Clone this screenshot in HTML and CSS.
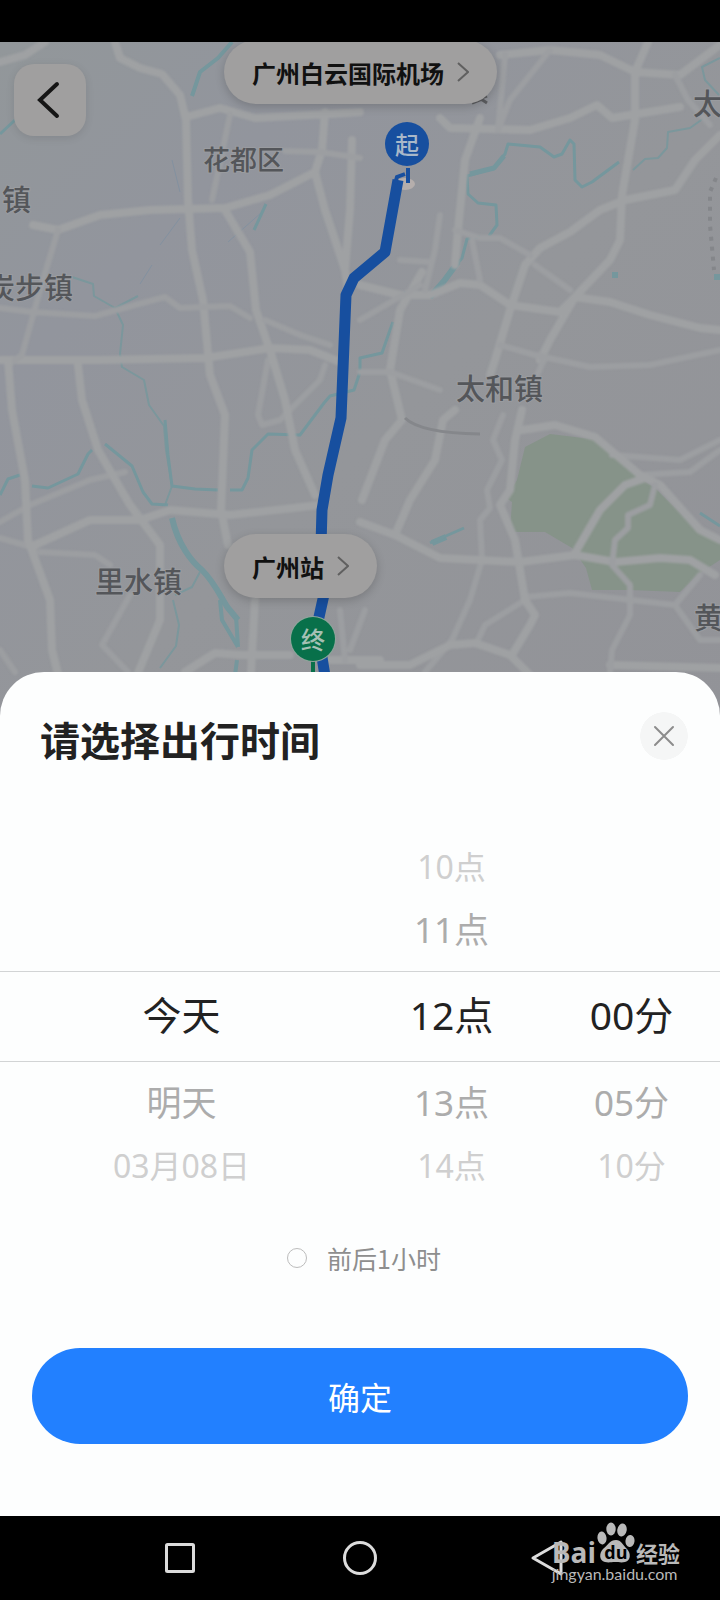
FILE: index.html
```html
<!DOCTYPE html>
<html lang="zh-CN">
<head>
<meta charset="utf-8">
<meta name="viewport" content="width=device-width, initial-scale=1">
<title>请选择出行时间</title>
<link rel="stylesheet" href="styles.css">
</head>
<body>
<div class="screen">
  <div class="status-bar"></div>

  <main class="map">
    <svg class="map-art" viewBox="0 42 720 680" aria-hidden="true">
      <defs>
        <linearGradient id="land" x1="0" y1="0" x2="1" y2="1">
          <stop offset="0" stop-color="#92979a"/>
          <stop offset="0.25" stop-color="#92959d"/>
          <stop offset="0.55" stop-color="#94969a"/>
          <stop offset="1" stop-color="#929398"/>
        </linearGradient>
      </defs>
      <rect x="0" y="42" width="720" height="680" fill="url(#land)"/>
      <path class="park" d="M525 447L550 434L600 440L640 478L655 488L700 532L720 543V560L700 573L680 592L630 590L592 590L586 568L572 548L545 532L510 532L512 502L506 498L517 480Z"/>
      <g class="water">
        <path class="w4" d="M232 42L218 58L200 72L192 96"/>
        <path class="w3" d="M0 134L15 120"/>
        <path class="w1" d="M172 160L180 192M180 218L160 245M152 265L140 284M262 212L228 242"/>
        <path class="w3" d="M266 204L254 230"/>
        <path class="w2" d="M72 277L93 284L94 296L115 308L123 325L120 354L122 367L144 380L149 405L164 426L166 450L172 486M172 486L165 505M115 308L138 296"/>
        <path class="w3" d="M165 420L168 455L172 486L195 489L218 490"/>
        <path class="w3" d="M0 495L8 479L20 475M32 486L48 488L78 474L88 454L92 450M105 444L132 466L143 492L152 504L168 505"/>
        <path class="w3" d="M230 490L242 490L248 478L252 450L268 434L300 435L324 403L330 396L354 390L360 372L360 358L382 353L390 330L393 322"/>
        <path class="w6" d="M172 518C178 545 192 562 202 570C216 584 222 600 228 608L238 620"/>
        <path class="w4" d="M220 600L222 620L238 647M236 616L238 647M237 660L233 690"/>
        <path class="w2" d="M200 572L192 587L175 595M173 600L179 625L176 646L160 668"/>
        <path class="w3" d="M480 237L467 239L462 258L444 280L430 298M404 293L417 294M402 304L400 312"/>
        <path class="w6" d="M458 262L444 281L430 297"/>
        <path class="w3" d="M489 236L497 225L496 205L478 203L468 194L467 176L494 168L505 154L508 144L540 147L554 157L562 154L570 140L574 144L575 180L582 187L592 182L619 162"/>
        <path class="w5" d="M470 174L494 168L504 156"/>
        <path class="w2" d="M633 170L645 159L658 158L667 148L668 132L690 128L704 118M720 58L702 67L705 80L719 95"/>
        <path class="w6" d="M432 543L446 537M612 275H618M714 277H720"/>
        <path class="w3" d="M430 543L464 528M700 513L720 526"/>
      </g>
      <g class="roads">
        <path d="M0 62L25 55L45 42M115 42L120 58L140 68L162 74L180 95L186 120L188 200L192 250L203 300L210 375L225 415L221 510L228 545M186 117L220 108L255 118L330 114L360 112M33 225L58 230L100 215L150 210L225 208L270 195L315 172L322 150L325 112M225 210L250 252L256 310L268 345M0 360L100 360L205 358L270 348L310 350L340 362M315 172L325 210L345 270L348 290M352 140L350 210L345 270"/>
        <path class="thin" d="M58 230L40 290L22 355L8 365M0 308L32 312L95 316L135 305L165 297L180 308L230 306L250 318M265 320L300 335L330 345M285 151L320 152L360 158M230 115L212 200M0 522L30 505L90 480L125 472M40 552L95 555L110 565M130 595L102 645L128 672M268 360L258 415L262 425L280 420L320 380L325 365M0 650L15 672M0 538L35 548"/>
        <path d="M8 360L12 410L25 480L28 540L50 600L52 650L62 690M78 365L82 400L98 450L130 505L160 545L160 620L135 680M35 545L90 520L140 520L170 510L230 515L320 505M270 350L285 400L295 450L315 495M185 672L215 653L240 655L290 655M255 600L250 690M330 660H380"/>
        <path d="M500 55L550 50L600 55L635 72L680 75L720 45M440 118L450 128L530 130L570 118L597 105L612 118L680 107M648 42L635 72L635 120L622 195L620 240L610 260L575 297L550 340L540 360M720 135L695 160L675 190L625 200L600 210L570 232L540 248L525 265L510 310L495 360L490 375M480 118L465 160L458 230L455 265M360 285L400 295L430 295L460 283L480 285L510 305L560 312L575 297L610 302L650 315L700 328L720 330M422 272L400 310L390 370L402 420L385 440L362 500M455 410L443 420L435 460L410 500L395 535"/>
        <path class="thin" d="M550 50L510 100L498 130M505 55L498 130M675 75L688 100L710 125M440 215L435 250L425 290M455 230L480 238L500 238L530 255M535 265L570 290M480 280L472 240M400 260L430 262M503 415L493 440L502 460L487 490L490 508L480 520L482 560L470 600L452 640L425 672M535 355L590 367L650 365L720 350M360 320L420 285M390 372L440 390M612 455L680 460L720 440M640 475L690 472L720 450M478 640L485 625L525 600M525 597L570 593L675 605L700 575M675 605L700 640L720 640M360 372L390 372M500 345L545 358L530 390"/>
        <path d="M360 522L395 535L440 558L520 562L575 555L615 562L660 558L690 560L715 575M522 410L515 440L510 490L500 505L515 540L525 600L535 615L530 625L512 655M522 430L555 425L595 437L640 475L660 485L700 530L720 540M575 553L600 510L625 485L645 478M360 665L410 665L450 645L475 643L510 655L535 680M610 665L720 668"/>
        <path class="thin" d="M655 485L650 505L628 515L628 528L615 540L612 565L630 585L630 615L612 650L610 672M340 610L345 660M365 610L350 650"/>
      </g>
      <path class="rail" d="M405 418Q420 433 480 434"/>
      <path class="plane" d="M472 103L482 99M481 98L487 96M481 99L487 103"/>
      <path class="dots" d="M716 178L710 192V225L714 270"/>
      <ellipse cx="405" cy="184" rx="10" ry="6" fill="#b5aeac"/>
      <path class="route" d="M398 180L385 252L354 278L346 295L341 418L328 475L322 510L321 545L325 590L317 626L325 676"/>
      <path class="route-tip" d="M408 168V183M395 184L397 177L405 174"/>
      <path class="end-tip" d="M313 660V680"/>
      <g class="places">
        <text class="place-s" x="203" y="170">花都区</text>
        <text x="2" y="211">镇</text>
        <text x="-14" y="299">炭步镇</text>
        <text x="456" y="400">太和镇</text>
        <text x="95" y="593">里水镇</text>
        <text x="693" y="115">太</text>
        <text x="694" y="629">黄</text>
      </g>
    </svg>

    <button class="back" type="button" aria-label="返回">
      <svg viewBox="0 0 28 40" width="28" height="40"><path d="M21 4L4 20L21 36"/></svg>
    </button>
    <button class="pill pill-start" type="button">广州白云国际机场
      <svg viewBox="0 0 12 20" width="12" height="20"><path d="M1 1L11 10L1 19"/></svg>
    </button>
    <button class="pill pill-end" type="button">广州站
      <svg viewBox="0 0 12 20" width="12" height="20"><path d="M1 1L11 10L1 19"/></svg>
    </button>
    <span class="pin pin-start">起</span>
    <span class="pin pin-end">终</span>
  </main>

  <section class="sheet" aria-labelledby="sheet-title">
    <header class="sheet-head">
      <h1 class="sheet-title" id="sheet-title">请选择出行时间</h1>
      <button class="close" type="button" aria-label="关闭">
        <svg viewBox="0 0 22 22" width="22" height="22"><path d="M2 2L20 20M20 2L2 20"/></svg>
      </button>
    </header>

    <div class="picker">
      <ul class="wheel" role="listbox" aria-label="日期">
        <li class="far"></li>
        <li class="near"></li>
        <li class="chosen" role="option" aria-selected="true">今天</li>
        <li class="near" role="option">明天</li>
        <li class="far" role="option">03月08日</li>
      </ul>
      <ul class="wheel" role="listbox" aria-label="小时">
        <li class="far" role="option">10点</li>
        <li class="near" role="option">11点</li>
        <li class="chosen" role="option" aria-selected="true">12点</li>
        <li class="near" role="option">13点</li>
        <li class="far" role="option">14点</li>
      </ul>
      <ul class="wheel" role="listbox" aria-label="分钟">
        <li class="far"></li>
        <li class="near"></li>
        <li class="chosen" role="option" aria-selected="true">00分</li>
        <li class="near" role="option">05分</li>
        <li class="far" role="option">10分</li>
      </ul>
    </div>

    <label class="flexible" for="flexible">
      <input class="flexible-input" type="radio" id="flexible">
      <span>前后1小时</span>
    </label>

    <button class="confirm" type="button">确定</button>
  </section>

  <nav class="nav-bar">
    <button class="nav-key" type="button" aria-label="最近任务">
      <svg viewBox="0 0 36 36" width="36" height="36"><rect x="4.500" y="4.500" width="27" height="27" rx="1"/></svg>
    </button>
    <button class="nav-key" type="button" aria-label="主屏幕">
      <svg viewBox="0 0 36 36" width="36" height="36"><circle cx="18" cy="18" r="15.500"/></svg>
    </button>
    <button class="nav-key" type="button" aria-label="返回上一页">
      <svg viewBox="0 0 36 36" width="36" height="36"><path d="M39 2V34L11 18Z"/></svg>
    </button>
    <div class="watermark">
      <div class="brand">
        <span class="brand-latin">Bai</span>
        <span class="paw">
          <svg viewBox="0 0 38 42" width="38" height="42" aria-hidden="true">
            <ellipse cx="5" cy="16" rx="4.500" ry="6.500" transform="rotate(-8 5 16)"/>
            <ellipse cx="14" cy="7" rx="4.700" ry="6.500"/>
            <ellipse cx="25" cy="8" rx="4.700" ry="6.500" transform="rotate(10 25 8)"/>
            <ellipse cx="33" cy="19" rx="4.500" ry="6" transform="rotate(8 33 19)"/>
            <path d="M19 18C24 18 26 23 30 27C34 31 34 39 28 40C24 41 22 40 18 40C14 40 12 41 8 40C2 39 2 31 6 27C11 23 13 18 19 18Z"/>
          </svg>
          <span class="paw-text">du</span>
        </span>
        <span class="brand-cn">经验</span>
      </div>
      <div class="brand-url">jingyan.baidu.com</div>
    </div>
  </nav>
</div>
</body>
</html>
```

FILE: styles.css
```css
* {
  box-sizing: border-box;
}

body {
  margin: 0;
  background: #000;
  font-family: "Noto Sans", "Noto Sans CJK SC", sans-serif;
  color: #222;
}

button {
  margin: 0;
  padding: 0;
  border: 0;
  background: none;
  font: inherit;
  color: inherit;
  cursor: pointer;
}

svg {
  display: block;
}

.screen {
  display: flex;
  flex-direction: column;
  min-height: 100vh;
}

.status-bar {
  height: 42px;
  position: relative;
  z-index: 1;
  background: #000;
}

/* Map */
.map {
  position: relative;
  overflow: hidden;
}

.map-art {
  width: 100%;
  height: auto;
}

.park {
  fill: #869389;
}

.water path {
  fill: none;
  stroke: #75979d;
  stroke-linejoin: round;
}

.water .w1 { stroke-width: 1; stroke: #8391a0; }
.water .w2 { stroke-width: 2; stroke: #7b979c; }
.water .w3 { stroke-width: 3; }
.water .w4 { stroke-width: 4; }
.water .w5 { stroke-width: 5; }
.water .w6 { stroke-width: 6; }

.roads {
  filter: blur(1px);
}

.roads path {
  fill: none;
  stroke: #9fa1a3;
  stroke-width: 8;
  stroke-linejoin: round;
  stroke-linecap: round;
}

.roads .thin {
  stroke: #9c9ea1;
  stroke-width: 6;
}

.rail {
  fill: none;
  stroke: #85878b;
  stroke-width: 3;
}

.plane {
  fill: none;
  stroke: #5c5d60;
  stroke-width: 3;
}

.dots {
  fill: none;
  stroke: #84868a;
  stroke-width: 4;
  stroke-dasharray: 4 6;
}

.route {
  fill: none;
  stroke: #174f9f;
  stroke-width: 11;
  stroke-linejoin: round;
}

.route-tip {
  fill: none;
  stroke: #174f9f;
  stroke-width: 4;
}

.end-tip {
  stroke: #08704a;
  stroke-width: 4;
}

.places text {
  fill: #54565a;
  stroke: #9a9ca0;
  stroke-width: 2;
  paint-order: stroke;
  font-family: "Noto Sans CJK SC", sans-serif;
  font-size: 29px;
  font-weight: 500;
}

.places .place-s {
  font-size: 27px;
}

.back {
  position: absolute;
  left: 14px;
  top: 22px;
  display: grid;
  place-items: center;
  width: 72px;
  height: 72px;
  border-radius: 20px;
  background: #a09f9f;
  box-shadow: 0 2px 8px rgba(0, 0, 0, 0.1);
}

.back path {
  fill: none;
  stroke: #151515;
  stroke-width: 4;
  stroke-linecap: round;
}

.pill {
  position: absolute;
  left: 224px;
  display: flex;
  align-items: center;
  gap: 13px;
  height: 64px;
  padding: 0 28px;
  border-radius: 32px;
  background: #a09f9f;
  box-shadow: 0 3px 10px rgba(0, 0, 0, 0.18);
  color: #111;
  font-family: "Noto Sans CJK SC", sans-serif;
  font-size: 24px;
  font-weight: 700;
  white-space: nowrap;
}

.pill path {
  fill: none;
  stroke: #606060;
  stroke-width: 2;
}

.pill-start { top: -2px; }
.pill-end { top: 492px; }

.pin {
  position: absolute;
  display: grid;
  place-items: center;
  width: 44px;
  height: 44px;
  border-radius: 50%;
  color: #a9b8c9;
  font-family: "Noto Sans CJK SC", sans-serif;
  font-size: 24px;
  font-weight: 500;
  line-height: 1;
}

.pin-start {
  left: 385px;
  top: 80px;
  background: #174f9f;
}

.pin-end {
  left: 291px;
  top: 575px;
  background: #08704a;
  color: #a5c0b4;
  box-shadow: 0 0 0 1px #8fa69c;
}

/* Bottom sheet */
.sheet {
  position: relative;
  flex: 1;
  display: flex;
  flex-direction: column;
  margin-top: -50px;
  padding: 38px 0 72px;
  border-radius: 44px 44px 0 0;
  background: #fdfefe;
}

.sheet-head {
  display: flex;
  align-items: flex-start;
  justify-content: space-between;
  margin: 0 32px 77px 40px;
}

.sheet-title {
  margin: 0;
  font-family: "Noto Sans CJK SC", sans-serif;
  font-size: 40px;
  font-weight: 700;
  line-height: 58px;
}

.close {
  display: grid;
  place-items: center;
  width: 48px;
  height: 52px;
  background: radial-gradient(circle closest-side, #f5f6f6 98%, transparent);
}

.close path {
  fill: none;
  stroke: #8c8c8c;
  stroke-width: 2;
  stroke-linecap: round;
}

.picker {
  display: grid;
  grid-template-columns: 2fr 1fr 1fr;
}

.wheel {
  margin: 0;
  padding: 0;
  list-style: none;
  text-align: center;
}

.wheel li {
  padding-left: 3px;
  white-space: nowrap;
}

.wheel .chosen {
  height: 91px;
  border-top: 1px solid #d2d4d5;
  border-bottom: 1px solid #d2d4d5;
  font-size: 39px;
  line-height: 86px;
}

.wheel .near {
  height: 82px;
  color: #acacac;
  font-size: 35px;
  line-height: 82px;
}

.wheel .far {
  height: 44px;
  color: #cfcfcf;
  font-size: 32px;
  line-height: 44px;
}

.flexible {
  display: flex;
  align-items: center;
  align-self: center;
  gap: 20px;
  height: 40px;
  margin: 50px 0 70px 8px;
  color: #8e8e8e;
  font-family: "Noto Sans CJK SC", sans-serif;
  font-size: 25px;
}

.flexible-input {
  appearance: none;
  width: 20px;
  height: 20px;
  margin: 0;
  border: 1px solid #bcbcbc;
  border-radius: 50%;
}

.flexible-input:checked {
  border: 6px solid #2280ff;
}

.confirm {
  height: 96px;
  margin: 0 32px;
  border-radius: 48px;
  background: #2280ff;
  color: #fff;
  font-family: "Noto Sans CJK SC", sans-serif;
  font-size: 32px;
  line-height: 92px;
}

/* System navigation */
.nav-bar {
  position: relative;
  display: grid;
  grid-template-columns: repeat(3, 1fr);
  place-items: center;
  height: 84px;
  padding: 0 12.5%;
  background: #000;
}

.nav-key path,
.nav-key rect,
.nav-key circle {
  fill: none;
  stroke: #dcdcdc;
  stroke-width: 3;
  stroke-linejoin: round;
}

.nav-key svg {
  overflow: visible;
}

.watermark {
  position: absolute;
  right: 40px;
  top: 6px;
  color: #b9b9b9;
}

.brand {
  display: flex;
  align-items: flex-end;
  gap: 1px;
  height: 42px;
  line-height: 24px;
}

.brand-latin {
  font-family: "Open Sans", sans-serif;
  font-size: 28px;
  font-weight: 700;
}

.paw {
  position: relative;
}

.paw svg {
  fill: #b9b9b9;
}

.paw-text {
  position: absolute;
  left: 0;
  right: 0;
  bottom: 0;
  color: #000;
  font-family: "Open Sans", sans-serif;
  font-size: 18px;
  font-weight: 700;
  text-align: center;
}

.brand-cn {
  font-family: "Noto Sans CJK SC", sans-serif;
  font-size: 22px;
  font-weight: 700;
}

.brand-url {
  font-family: Lato, "Noto Sans", sans-serif;
  font-size: 16px;
  line-height: 20px;
}
```
